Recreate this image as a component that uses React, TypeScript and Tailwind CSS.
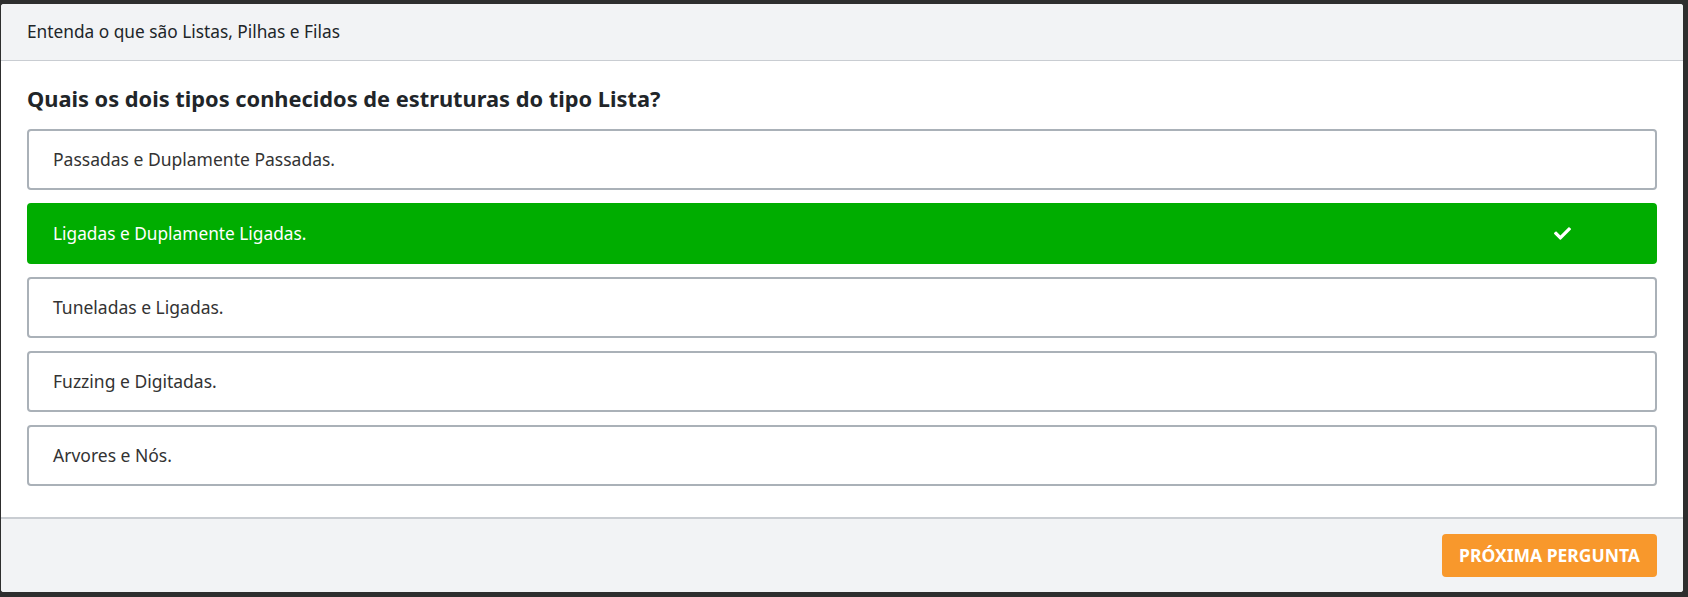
const options = [
  { text: "Passadas e Duplamente Passadas.", correct: false },
  { text: "Ligadas e Duplamente Ligadas.", correct: true },
  { text: "Tuneladas e Ligadas.", correct: false },
  { text: "Fuzzing e Digitadas.", correct: false },
  { text: "Arvores e Nós.", correct: false },
];

const CheckMark = () => (
  <svg viewBox="0 0 512 512" className="h-[17px] w-[17px]" fill="currentColor">
    <path d="M173.898 439.404l-166.4-166.4c-9.997-9.997-9.997-26.206 0-36.204l36.203-36.204c9.997-9.998 26.207-9.998 36.204 0L192 312.69 432.095 72.596c9.997-9.997 26.207-9.997 36.204 0l36.203 36.204c9.997 9.997 9.997 26.206 0 36.204l-294.4 294.401c-9.998 9.997-26.207 9.997-36.204-.001z" />
  </svg>
);

export default function App() {
  return (
    <div
      className="h-[597px] w-[1688px] bg-[#2e2e2e] pt-1 pl-px pr-[5px] pb-[5px]"
      style={{ fontFamily: '"Noto Sans", "Open Sans", sans-serif' }}
    >
      <div className="flex h-full flex-col overflow-hidden rounded-[3px] bg-white">
        <div className="flex h-[57px] items-center border-b border-[#c9cdd2] bg-[#f2f3f5] px-[26px] text-[17.3px] text-[#212529]">
          Entenda o que são Listas, Pilhas e Filas
        </div>

        <div className="flex-1 px-[26px] pt-[22px]">
          <h2 className="mb-[14px] text-[21.8px] font-bold leading-[32px] text-[#212529]">
            Quais os dois tipos conhecidos de estruturas do tipo Lista?
          </h2>
          <div className="flex flex-col gap-[13px]">
            {options.map((o) =>
              o.correct ? (
                <div
                  key={o.text}
                  className="flex h-[61px] items-center justify-between rounded-[4px] border-2 border-[#00ad00] bg-[#00ad00] pl-[24px] pr-[84px] text-[17.3px] text-white"
                >
                  <span>{o.text}</span>
                  <CheckMark />
                </div>
              ) : (
                <div
                  key={o.text}
                  className="flex h-[61px] items-center rounded-[4px] border-2 border-[#aab1b8] bg-white pl-[24px] text-[17.5px] text-[#333333]"
                >
                  {o.text}
                </div>
              )
            )}
          </div>
        </div>

        <div className="flex h-[75px] items-start justify-end border-t-2 border-[#c9cdd2] bg-[#f2f3f5] px-[26px] pt-[15px]">
          <button className="h-[43px] w-[215px] rounded-[4px] bg-[#f8982c] text-[17.5px] font-bold text-white">
            PRÓXIMA PERGUNTA
          </button>
        </div>
      </div>
    </div>
  );
}
